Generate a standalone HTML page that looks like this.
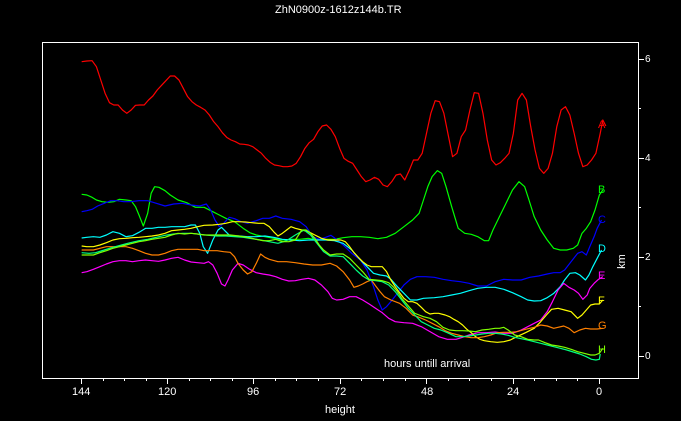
<!DOCTYPE html>
<html><head><meta charset="utf-8"><style>
html,body{margin:0;padding:0;background:#000;width:681px;height:421px;overflow:hidden}
.t{position:absolute;color:#fff;font-family:"Liberation Sans",sans-serif;font-size:11px;line-height:11px;white-space:nowrap}
svg{position:absolute;left:0;top:0}
</style></head><body>
<svg width="681" height="421" viewBox="0 0 681 421">
<rect x="42.5" y="42.5" width="596" height="336" fill="none" stroke="#fff" stroke-width="1"/>
<g stroke="#fff" stroke-width="1">
<line x1="638" y1="59.5" x2="644" y2="59.5"/><line x1="638" y1="108.5" x2="641" y2="108.5"/>
<line x1="638" y1="158.5" x2="644" y2="158.5"/><line x1="638" y1="207.5" x2="641" y2="207.5"/>
<line x1="638" y1="257.5" x2="644" y2="257.5"/><line x1="638" y1="306.5" x2="641" y2="306.5"/>
<line x1="638" y1="356.5" x2="644" y2="356.5"/>
</g>
</svg>
<svg width="681" height="421" viewBox="0 0 1568 1263" preserveAspectRatio="none">
<g fill="none" stroke-width="1.2" stroke-linejoin="round">
<polyline vector-effect="non-scaling-stroke" stroke="#ff0000" points="188,185 200,183 212,182 222,200 232,240 242,280 252,308 262,315 272,315 282,330 292,340 302,330 312,316 322,315 332,315 342,300 352,288 362,270 372,256 382,242 392,228 402,228 412,240 422,265 432,290 442,305 452,315 462,322 472,330 482,345 492,365 502,380 512,398 522,412 532,420 542,425 552,432 562,433 572,435 582,440 592,450 602,460 612,475 622,487 632,495 642,497 652,500 662,500 672,498 682,490 692,470 702,445 712,428 722,418 732,395 742,378 752,375 762,388 772,410 782,445 792,475 802,484 812,490 822,510 832,530 842,545 852,540 862,532 872,538 882,555 892,560 902,545 912,525 922,522 932,540 942,512 952,480 962,480 972,460 982,400 992,340 1002,302 1012,305 1022,340 1032,405 1042,470 1052,460 1062,410 1072,390 1082,330 1092,278 1102,280 1112,340 1122,420 1132,480 1142,495 1152,488 1162,475 1172,460 1182,400 1192,300 1202,280 1212,300 1222,380 1232,450 1242,505 1252,520 1262,505 1272,460 1282,380 1292,330 1302,320 1312,345 1322,400 1332,460 1342,500 1352,495 1362,480 1372,460 1382,400 1388,360 1395,378"/>
<polyline vector-effect="non-scaling-stroke" stroke="#00ff00" points="188,583 200,585 212,592 222,600 235,605 250,607 262,605 275,598 290,600 302,602 312,620 320,645 330,678 340,640 348,580 356,560 366,562 380,572 392,585 410,600 430,608 450,622 470,622 490,635 505,645 520,655 540,665 560,685 575,698 590,705 610,710 630,715 650,720 670,718 690,718 710,715 730,720 750,718 770,718 790,713 810,710 830,710 850,712 870,716 890,712 910,700 930,680 950,660 965,640 975,600 985,560 995,530 1007,512 1017,520 1027,560 1040,620 1055,685 1070,700 1085,703 1100,710 1115,722 1125,722 1135,690 1150,650 1165,610 1180,570 1195,545 1208,560 1218,600 1230,650 1245,690 1260,720 1275,745 1290,750 1305,750 1320,745 1330,735 1340,700 1350,685 1360,665 1370,630 1380,585 1388,570"/>
<polyline vector-effect="non-scaling-stroke" stroke="#0000ff" points="188,635 200,632 212,628 225,618 240,610 255,602 270,602 285,605 300,605 320,602 340,602 360,610 380,618 400,612 420,610 440,615 460,618 475,612 485,630 495,660 505,680 515,670 528,652 540,656 555,665 570,670 590,662 605,655 620,655 635,648 650,655 670,658 690,665 705,680 720,710 735,718 750,712 762,706 775,718 790,735 810,760 830,780 845,810 860,860 870,900 880,930 890,920 900,905 915,880 930,855 945,838 960,830 980,830 1000,832 1020,838 1040,842 1060,845 1080,850 1100,858 1120,858 1140,845 1160,838 1180,840 1200,840 1220,832 1240,828 1260,822 1275,818 1290,818 1300,810 1315,785 1330,760 1340,755 1350,765 1358,740 1368,710 1375,685 1385,660"/>
<polyline vector-effect="non-scaling-stroke" stroke="#00ffff" points="188,714 200,712 215,710 230,712 245,705 260,695 275,700 290,710 305,707 320,697 335,685 350,685 365,682 380,682 395,680 410,680 425,680 440,675 450,675 460,700 468,740 478,760 490,720 502,690 510,682 520,695 530,708 550,708 570,710 590,710 610,708 630,712 650,718 670,720 690,722 710,720 730,720 750,720 770,722 790,730 810,750 830,780 845,800 860,820 875,825 890,828 900,838 915,860 930,880 945,900 960,900 975,895 1000,893 1020,890 1040,885 1060,880 1080,872 1100,865 1120,862 1140,862 1160,868 1180,878 1200,890 1215,900 1230,903 1245,902 1260,893 1275,880 1290,860 1300,840 1312,820 1325,818 1335,825 1348,840 1356,825 1365,800 1375,775 1385,750"/>
<polyline vector-effect="non-scaling-stroke" stroke="#ff00ff" points="188,818 200,815 215,808 230,800 245,792 260,785 275,782 290,782 305,785 320,782 335,780 350,782 365,784 380,780 395,775 410,772 425,780 440,786 455,788 470,790 480,785 490,795 500,820 510,852 518,858 525,840 535,810 548,790 560,795 575,808 590,818 605,822 620,825 635,830 650,838 665,843 680,842 695,838 710,835 725,840 740,855 755,875 765,895 775,900 790,898 805,890 820,890 835,900 850,912 865,925 880,938 895,955 910,965 930,968 950,970 970,980 990,995 1010,1010 1030,1018 1050,1018 1065,1012 1080,1005 1100,998 1120,998 1140,996 1160,1000 1180,1000 1200,990 1215,980 1230,970 1245,960 1260,935 1272,905 1285,870 1298,850 1310,862 1322,870 1332,880 1342,898 1352,885 1358,865 1368,850 1378,838 1388,830"/>
<polyline vector-effect="non-scaling-stroke" stroke="#ffff00" points="188,738 200,740 215,740 230,735 245,728 260,720 275,716 290,715 305,713 320,712 335,710 350,708 365,705 380,700 395,692 410,690 425,688 440,685 455,680 470,676 490,675 505,673 520,670 535,665 550,665 565,666 580,668 595,670 608,670 620,680 630,695 640,708 650,700 660,690 670,680 680,685 695,690 710,695 725,705 740,715 755,720 770,720 785,720 795,725 805,740 815,758 825,772 835,785 845,795 855,800 870,800 880,800 890,815 900,840 910,860 920,878 930,895 940,905 950,905 960,910 970,922 980,935 990,942 1000,940 1010,940 1025,945 1035,950 1045,958 1055,965 1065,975 1075,988 1085,998 1095,1010 1105,1018 1115,1022 1130,1025 1145,1027 1160,1025 1175,1020 1190,1010 1210,998 1230,985 1245,965 1258,945 1270,928 1285,925 1300,930 1315,935 1330,955 1340,945 1350,930 1360,915 1370,912 1380,912 1388,900"/>
<polyline vector-effect="non-scaling-stroke" stroke="#ff8000" points="188,750 200,750 215,750 230,745 245,740 260,740 275,740 290,740 305,745 320,752 335,760 350,765 365,765 380,760 395,752 410,748 425,748 440,748 455,748 470,752 485,752 500,752 515,755 530,757 540,770 548,790 560,810 570,822 580,815 590,790 600,762 610,772 620,778 640,785 660,785 680,788 700,792 720,795 740,795 760,790 775,798 790,815 805,840 815,862 825,858 835,852 845,845 855,840 865,858 875,875 885,890 900,900 920,910 935,925 950,945 965,952 980,960 995,970 1010,980 1025,992 1040,1000 1055,1005 1070,1010 1085,1013 1100,1013 1115,1010 1130,1005 1145,998 1160,997 1175,997 1190,995 1210,988 1230,982 1245,975 1260,978 1275,985 1285,982 1298,978 1310,985 1322,998 1335,990 1348,985 1360,987 1375,987 1388,985"/>
<polyline vector-effect="non-scaling-stroke" stroke="#00ff80" points="188,758 205,760 220,758 240,750 260,742 280,735 300,728 320,722 340,718 360,712 380,706 400,702 420,700 440,700 460,703 480,706 500,708 520,708 540,710 560,712 580,716 600,720 620,725 640,730 660,722 680,705 700,690 715,705 730,730 745,755 760,768 775,768 790,770 805,790 820,810 835,828 850,840 865,842 880,845 895,855 910,875 925,900 940,925 955,945 970,965 985,975 1000,985 1015,990 1030,998 1050,1010 1065,1010 1080,1008 1095,1005 1110,1002 1125,1000 1140,1000 1155,1002 1170,1006 1185,1012 1200,1016 1215,1020 1230,1025 1245,1030 1260,1035 1275,1040 1290,1045 1305,1050 1320,1056 1335,1062 1350,1070 1362,1078 1372,1080 1380,1078 1382,1062"/>
<polyline vector-effect="non-scaling-stroke" stroke="#80ff00" points="188,765 200,765 215,765 230,758 245,752 260,745 275,740 290,735 305,730 320,725 335,722 350,718 365,715 380,712 395,705 410,700 425,702 440,700 455,702 470,705 490,705 510,705 530,705 550,708 570,712 590,718 605,722 620,722 635,718 650,725 665,725 680,720 695,690 705,690 715,700 725,715 735,735 745,750 760,765 775,762 790,762 805,775 820,795 835,815 850,838 865,840 880,842 895,848 905,860 915,875 925,895 935,910 945,925 955,940 965,945 975,950 990,955 1005,965 1020,982 1035,990 1050,992 1065,992 1080,993 1095,995 1110,990 1125,988 1140,985 1150,985 1160,982 1170,990 1185,1005 1200,1010 1215,1018 1230,1020 1240,1020 1255,1028 1270,1035 1285,1038 1300,1042 1315,1048 1330,1055 1345,1060 1360,1065 1370,1065 1380,1060 1388,1045"/>
</g>
</svg>
<svg width="681" height="421" viewBox="0 0 681 421">
<g stroke="#fff" stroke-width="1">
<line x1="81.5" y1="378" x2="81.5" y2="384"/><line x1="103.5" y1="378" x2="103.5" y2="381"/>
<line x1="124.5" y1="378" x2="124.5" y2="381"/><line x1="146.5" y1="378" x2="146.5" y2="381"/>
<line x1="167.5" y1="378" x2="167.5" y2="384"/><line x1="189.5" y1="378" x2="189.5" y2="381"/>
<line x1="210.5" y1="378" x2="210.5" y2="381"/><line x1="232.5" y1="378" x2="232.5" y2="381"/>
<line x1="253.5" y1="378" x2="253.5" y2="384"/><line x1="275.5" y1="378" x2="275.5" y2="381"/>
<line x1="296.5" y1="378" x2="296.5" y2="381"/><line x1="318.5" y1="378" x2="318.5" y2="381"/>
<line x1="340.5" y1="378" x2="340.5" y2="384"/><line x1="361.5" y1="378" x2="361.5" y2="381"/>
<line x1="383.5" y1="378" x2="383.5" y2="381"/><line x1="405.5" y1="378" x2="405.5" y2="381"/>
<line x1="426.5" y1="378" x2="426.5" y2="384"/><line x1="448.5" y1="378" x2="448.5" y2="381"/>
<line x1="469.5" y1="378" x2="469.5" y2="381"/><line x1="491.5" y1="378" x2="491.5" y2="381"/>
<line x1="513.5" y1="378" x2="513.5" y2="384"/><line x1="534.5" y1="378" x2="534.5" y2="381"/>
<line x1="556.5" y1="378" x2="556.5" y2="381"/><line x1="577.5" y1="378" x2="577.5" y2="381"/>
<line x1="599.5" y1="378" x2="599.5" y2="384"/>
</g>
</svg>
<div class="t" style="left:275px;top:5px">ZhN0900z-1612z144b.TR</div>
<div class="t" style="left:645px;top:54px;font-size:10px">6</div>
<div class="t" style="left:645px;top:153px;font-size:10px">4</div>
<div class="t" style="left:645px;top:252px;font-size:10px">2</div>
<div class="t" style="left:645px;top:351px;font-size:10px">0</div>
<div class="t" style="left:615px;top:256px;transform:rotate(-90deg);transform-origin:center">km</div>
<div class="t" style="left:384px;top:359px">hours untill arrival</div>
<div class="t" style="left:325px;top:405px">height</div>
<div class="t" style="left:72px;top:387px">144</div>
<div class="t" style="left:158px;top:387px">120</div>
<div class="t" style="left:247px;top:387px">96</div>
<div class="t" style="left:334px;top:387px">72</div>
<div class="t" style="left:421px;top:387px">48</div>
<div class="t" style="left:507px;top:387px">24</div>
<div class="t" style="left:596px;top:387px">0</div>
<div class="t" style="left:598px;top:120px;color:#ff0000">A</div>
<div class="t" style="left:598px;top:185px;color:#00ff00">B</div>
<div class="t" style="left:598px;top:215px;color:#0000ff">C</div>
<div class="t" style="left:598px;top:244px;color:#00ffff">D</div>
<div class="t" style="left:598px;top:271px;color:#ff00ff">E</div>
<div class="t" style="left:598px;top:296px;color:#ffff00">F</div>
<div class="t" style="left:598px;top:321px;color:#ff8000">G</div>
<div class="t" style="left:598px;top:345px;color:#80ff00">H</div>
</body></html>
